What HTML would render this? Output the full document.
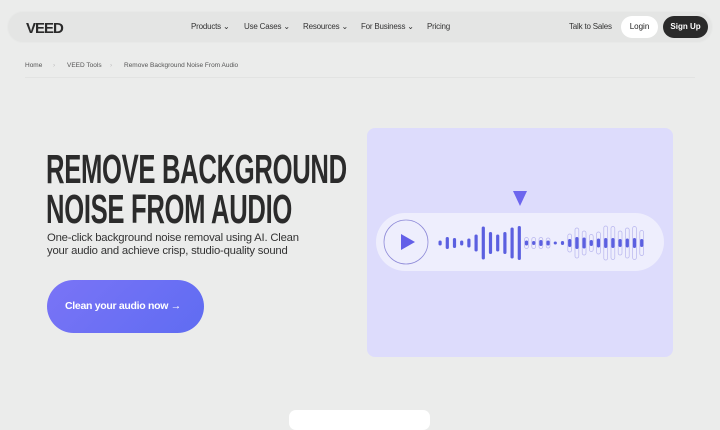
<!DOCTYPE html>
<html><head><style>
*{margin:0;padding:0;box-sizing:border-box}
body{width:720px;height:420px;overflow:hidden;background:#ebeceb;font-family:"Liberation Sans",sans-serif;color:#222;position:relative}
.nav{position:absolute;left:7px;top:11px;width:706px;height:32px;border-radius:16px;background:#e4e5e4;border:1px solid #e8e9e8}
.logo{position:absolute;left:18px;top:8px;font-weight:900;font-size:15px;letter-spacing:-1px;color:#2a2a2a}
.links{position:absolute;top:10px;font-size:8px;color:#333;letter-spacing:-.2px}
.links span{position:absolute;white-space:nowrap}
.btn{position:absolute;top:4px;height:22px;border-radius:11px;font-size:8px;line-height:22px;text-align:center}
.bc{position:absolute;top:62px;font-size:6.5px;color:#555}
h1{position:absolute;left:46px;top:149px;font-family:"Liberation Sans Narrow","Liberation Sans",sans-serif;font-weight:700;font-size:41px;line-height:40px;color:#2b2b2b;transform:scaleX(.625);transform-origin:0 0;white-space:nowrap;letter-spacing:-.5px}
.sub{position:absolute;left:47px;top:232px;font-size:11.3px;line-height:13px;color:#333;letter-spacing:-.2px}
.cta{position:absolute;left:47px;top:280px;width:157px;height:53px;border-radius:27px;background:linear-gradient(135deg,#7a74f6,#5f6cf2);color:#fff;font-weight:700;font-size:10.5px;line-height:53px;padding-left:18px;letter-spacing:-.3px}
.panel{position:absolute;left:367px;top:128px;width:306px;height:229px;border-radius:8px;background:#dddcfc}
.card{position:absolute;left:289px;top:410px;width:141px;height:20px;border-radius:7px;background:#fff}
</style></head><body>
<div class="nav">
<div class="logo">VEED</div>
<div class="links">
<span style="left:183px">Products ⌄</span>
<span style="left:236px">Use Cases ⌄</span>
<span style="left:295px">Resources ⌄</span>
<span style="left:353px">For Business ⌄</span>
<span style="left:419px">Pricing</span>
<span style="left:561px">Talk to Sales</span>
</div>
<div class="btn" style="left:613px;width:37px;background:#fff">Login</div>
<div class="btn" style="left:655px;width:45px;background:#2a2a2a;color:#fff;font-weight:700">Sign Up</div>
</div>
<div class="bc" style="left:25px">Home</div>
<div class="bc" style="left:53px;color:#bbb">›</div>
<div class="bc" style="left:67px">VEED Tools</div>
<div class="bc" style="left:110px;color:#bbb">›</div>
<div class="bc" style="left:124px">Remove Background Noise From Audio</div>
<div style="position:absolute;left:25px;top:77px;width:670px;height:1px;background:#e2e3e2"></div>
<h1>REMOVE BACKGROUND<br>NOISE FROM AUDIO</h1>
<div class="sub">One-click background noise removal using AI. Clean<br>your audio and achieve crisp, studio-quality sound</div>
<div class="cta">Clean your audio now →</div>
<div class="panel"></div>
<svg style="position:absolute;left:0;top:0" width="720" height="420">
<path d="M513 191 L527 191 L520 206 Z" fill="#6d66ee"/>
<rect x="376" y="213" width="288" height="58" rx="29" fill="#eeeefd"/>
<circle cx="406" cy="242" r="22" fill="none" stroke="#8f8bd8" stroke-width="0.8"/>
<path d="M401 234 L401 250 L415 242 Z" fill="#635fe8"/>
<g id="bars"></g>
</svg>
<div class="card"></div>
<script>
var f=[5,12,10,5,9,17,33,22,17,22,31,34];
var inner=[5,4,6,5,3,4,8,12,11,6,9,10,10,8,9,10,8];
var outer=[11,11,11,10,0,0,18,30,24,17,22,34,33,24,30,33,25];
var s='';var x=438.5;
for(var i=0;i<f.length;i++){s+='<rect x="'+x+'" y="'+(243-f[i]/2)+'" width="3.2" height="'+f[i]+'" rx="1.6" fill="#5b5fe0"/>';x+=7.2;}
for(var j=0;j<inner.length;j++){if(outer[j])s+='<rect x="'+(x-0.3)+'" y="'+(243-outer[j]/2)+'" width="3.8" height="'+outer[j]+'" rx="1.9" fill="none" stroke="#b7b5ee" stroke-width="0.7"/>';s+='<rect x="'+x+'" y="'+(243-inner[j]/2)+'" width="3.2" height="'+inner[j]+'" rx="1.6" fill="#5b5fe0"/>';x+=7.2;}
document.getElementById('bars').innerHTML=s;
</script>
</body></html>
